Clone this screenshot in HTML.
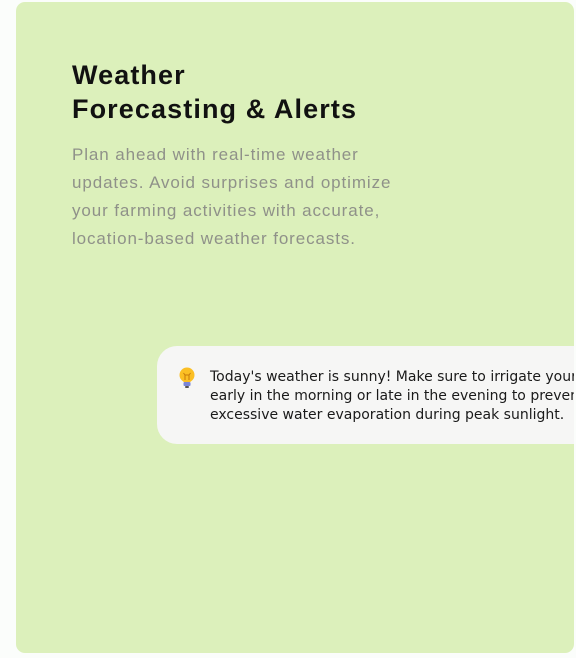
<!DOCTYPE html>
<html><head><meta charset="utf-8"><style>
html,body{margin:0;padding:0;width:576px;height:658px;background:#fbfdfb;overflow:hidden;font-family:"Liberation Sans",sans-serif;}
.card{position:absolute;left:16px;top:2px;width:558px;height:651px;background:#dcf0bb;border-radius:9px;overflow:hidden;}
h1{position:absolute;left:56px;top:56px;margin:0;font-size:27px;line-height:34px;font-weight:700;color:#111;letter-spacing:1.1px;white-space:nowrap;}
p{position:absolute;left:56px;top:139px;margin:0;white-space:nowrap;font-size:17px;line-height:28px;color:#8f9189;letter-spacing:0.9px;}
.tip{position:absolute;left:141px;top:344px;width:460px;height:98px;background:#f6f6f5;border-radius:20px;}
.tip svg{position:absolute;left:21px;top:21px;}
.tip div{position:absolute;left:53px;top:22px;width:420px;white-space:nowrap;font-family:"DejaVu Sans",sans-serif;font-size:14px;line-height:19px;color:#1a1a1a;}
</style></head><body>
<div class="card">
<h1>Weather<br>Forecasting &amp; Alerts</h1>
<p>Plan ahead with real-time weather<br>updates. Avoid surprises and optimize<br>your farming activities with accurate,<br>location-based weather forecasts.</p>
<div class="tip">
<svg width="18" height="22" viewBox="0 0 18 22"><circle cx="9" cy="8" r="7.5" fill="#fbbf24"/><rect x="5.5" y="12" width="7" height="3" fill="#fbbf24"/><path d="M7 13V8l-1.5-2M11 13V8l1.5-2M7 8h4" stroke="#c77a0a" stroke-width="1" fill="none"/><rect x="5.5" y="15" width="7" height="4" rx="1" fill="#7b86d6"/><rect x="7" y="19" width="4" height="2" rx="1" fill="#555"/></svg>
<div>Today's weather is sunny! Make sure to irrigate your crops<br>early in the morning or late in the evening to prevent<br>excessive water evaporation during peak sunlight.</div>
</div>
</div>
</body></html>
